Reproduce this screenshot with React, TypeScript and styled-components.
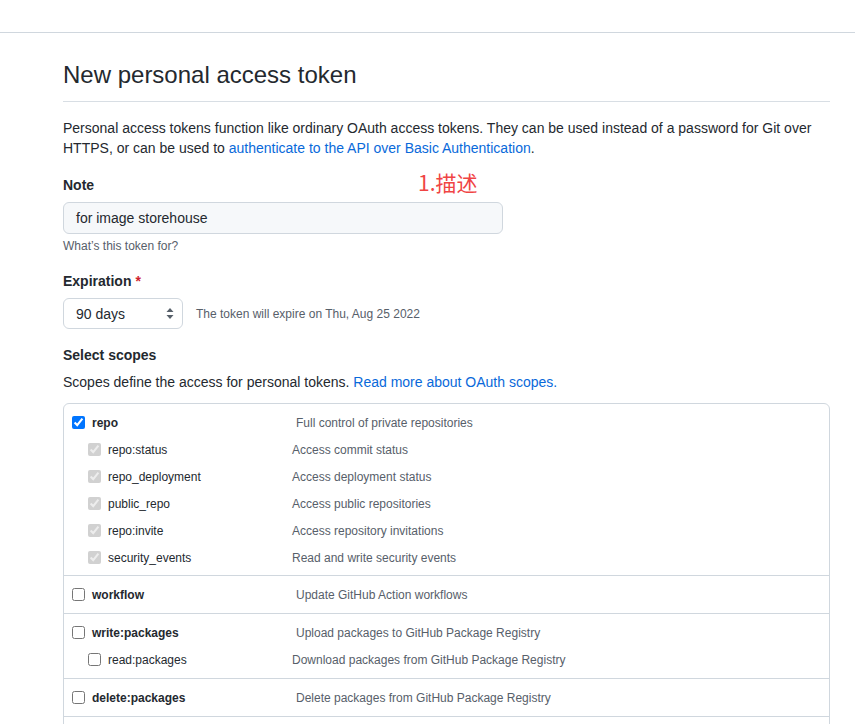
import React from 'react';
import styled, { createGlobalStyle } from 'styled-components';

const GlobalStyle = createGlobalStyle`
    html, body {
        margin: 0;
        padding: 0;
        background: #ffffff;
    }
    body {
        font-family: "Liberation Sans", Arial, sans-serif;
        color: #24292f;
        font-size: 14px;
    }
`;

const TopBar = styled.div`
    height: 32px;
    border-bottom: 1px solid #d0d7de;
`;

const Content = styled.div`
    padding: 24px 25px 0 63px;
`;

const Heading = styled.h2`
    margin: 0;
    padding-bottom: 8px;
    font-size: 24px;
    line-height: 36px;
    font-weight: 400;
    border-bottom: 1px solid #d8dee4;
`;

const Intro = styled.p`
    margin: 16px 0 17px;
    line-height: 20px;
`;

const Link = styled.a`
    color: #0969da;
    text-decoration: none;
`;

const FormGroup = styled.div<{ gap?: number }>`
    position: relative;
    margin-bottom: ${props => props.gap ?? 16}px;
`;

const Label = styled.div`
    font-weight: 700;
    line-height: 20px;
    margin-bottom: 7px;
`;

const Required = styled.span`
    color: #cf222e;
    margin-left: 4px;
`;

const Annotation = styled.span`
    position: absolute;
    left: 355px;
    top: -8px;
    font-family: "Noto Sans CJK SC", "Noto Sans", sans-serif;
    font-size: 21px;
    color: #f04444;
`;

const TextInput = styled.div`
    box-sizing: border-box;
    width: 440px;
    height: 32px;
    padding: 0 12px;
    display: flex;
    align-items: center;
    background: #f6f8fa;
    border: 1px solid #d0d7de;
    border-radius: 6px;
`;

const Hint = styled.div`
    margin-top: 3px;
    font-size: 12px;
    line-height: 18px;
    color: #57606a;
`;

const SelectRow = styled.div`
    display: flex;
    align-items: center;
    gap: 13px;
`;

const Select = styled.div`
    box-sizing: border-box;
    width: 120px;
    height: 31px;
    padding: 0 8px 0 12px;
    display: flex;
    align-items: center;
    justify-content: space-between;
    border: 1px solid #d0d7de;
    border-radius: 6px;
    background: #ffffff;
`;

const SmallNote = styled.span`
    font-size: 12px;
    color: #57606a;
`;

const Description = styled.div`
    line-height: 20px;
    margin-bottom: 11px;
`;

const ScopeTable = styled.div`
    border: 1px solid #d0d7de;
    border-radius: 6px;
`;

const ScopeGroup = styled.div`
    padding: 5px 0;
    &:first-child {
        padding-bottom: 4px;
    }
    & + & {
        border-top: 1px solid #d0d7de;
    }
`;

const ScopeRow = styled.label<{ sub?: boolean }>`
    display: flex;
    align-items: center;
    height: 27px;
    padding-left: ${props => (props.sub ? 24 : 8)}px;
    font-size: 12px;
`;

const ScopeName = styled.span<{ sub?: boolean }>`
    display: flex;
    align-items: center;
    gap: 7px;
    width: ${props => (props.sub ? 204 : 224)}px;
    font-weight: ${props => (props.sub ? 400 : 700)};
    color: #24292f;
`;

const Box = styled.input`
    margin: 0;
    width: 13px;
    height: 13px;
`;

const ScopeText = styled.span`
    color: #57606a;
`;

const SelectArrows = () => (
    <svg width="8" height="11" viewBox="0 0 8 11">
        <path d="M4 0 L7.5 4 H0.5 Z M4 11 L7.5 7 H0.5 Z" fill="#57606a" />
    </svg>
);

interface Scope {
    name: string;
    text: string;
    checked?: boolean;
    children?: Scope[];
}

const scopes: Scope[] = [
    {
        name: 'repo',
        text: 'Full control of private repositories',
        checked: true,
        children: [
            { name: 'repo:status', text: 'Access commit status', checked: true },
            { name: 'repo_deployment', text: 'Access deployment status', checked: true },
            { name: 'public_repo', text: 'Access public repositories', checked: true },
            { name: 'repo:invite', text: 'Access repository invitations', checked: true },
            { name: 'security_events', text: 'Read and write security events', checked: true },
        ],
    },
    { name: 'workflow', text: 'Update GitHub Action workflows' },
    {
        name: 'write:packages',
        text: 'Upload packages to GitHub Package Registry',
        children: [{ name: 'read:packages', text: 'Download packages from GitHub Package Registry' }],
    },
    { name: 'delete:packages', text: 'Delete packages from GitHub Package Registry' },
    {
        name: 'admin:org',
        text: 'Full control of orgs and teams, read and write org projects',
        children: [
            { name: 'write:org', text: 'Read and write org and team membership, read and write org projects' },
            { name: 'read:org', text: 'Read org and team membership, read org projects' },
        ],
    },
];

const App: React.FC = () => {
    return (
        <>
            <GlobalStyle />
            <TopBar />
            <Content>
                <Heading>New personal access token</Heading>
                <Intro>
                    Personal access tokens function like ordinary OAuth access tokens. They can be used instead of a password for Git over
                    HTTPS, or can be used to <Link href="#">authenticate to the API over Basic Authentication</Link>.
                </Intro>

                <FormGroup>
                    <Label>Note</Label>
                    <Annotation>1.描述</Annotation>
                    <TextInput>for image storehouse</TextInput>
                    <Hint>What&rsquo;s this token for?</Hint>
                </FormGroup>

                <FormGroup gap={16}>
                    <Label>
                        Expiration<Required>*</Required>
                    </Label>
                    <SelectRow>
                        <Select>
                            90 days
                            <SelectArrows />
                        </Select>
                        <SmallNote>The token will expire on Thu, Aug 25 2022</SmallNote>
                    </SelectRow>
                </FormGroup>

                <Label>Select scopes</Label>
                <Description>
                    Scopes define the access for personal tokens. <Link href="#">Read more about OAuth scopes.</Link>
                </Description>

                <ScopeTable>
                    {scopes.map(scope => (
                        <ScopeGroup key={scope.name}>
                            <ScopeRow>
                                <ScopeName>
                                    <Box type="checkbox" defaultChecked={scope.checked} />
                                    {scope.name}
                                </ScopeName>
                                <ScopeText>{scope.text}</ScopeText>
                            </ScopeRow>
                            {scope.children?.map(child => (
                                <ScopeRow sub key={child.name}>
                                    <ScopeName sub>
                                        <Box type="checkbox" defaultChecked={child.checked} disabled={scope.checked} />
                                        {child.name}
                                    </ScopeName>
                                    <ScopeText>{child.text}</ScopeText>
                                </ScopeRow>
                            ))}
                        </ScopeGroup>
                    ))}
                </ScopeTable>
            </Content>
        </>
    );
};

export default App;
